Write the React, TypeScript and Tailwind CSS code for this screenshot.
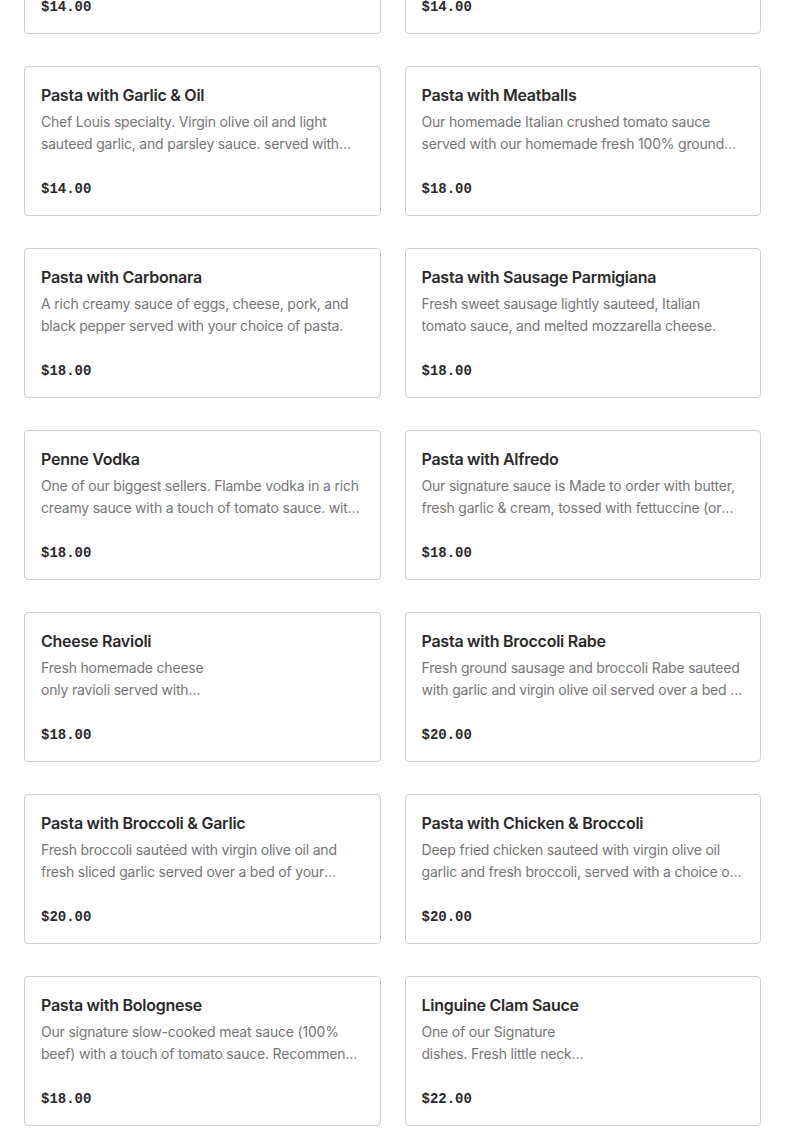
import React from 'react';

interface MenuItem {
  name: string;
  description: string;
  price: string;
  narrow?: boolean;
}

const items: MenuItem[] = [
  { name: 'Pasta with Marinara', description: 'Our homemade Italian crushed tomato sauce served over your choice of pasta.', price: '$14.00' },
  { name: 'Pasta with Butter', description: 'Fresh butter and parmesan cheese served over your choice of pasta.', price: '$14.00' },
  { name: 'Pasta with Garlic & Oil', description: 'Chef Louis specialty. Virgin olive oil and light sauteed garlic, and parsley sauce. served with your choice of pasta.', price: '$14.00' },
  { name: 'Pasta with Meatballs', description: 'Our homemade Italian crushed tomato sauce served with our homemade fresh 100% ground beef meatballs.', price: '$18.00' },
  { name: 'Pasta with Carbonara', description: 'A rich creamy sauce of eggs, cheese, pork, and black pepper served with your choice of pasta.', price: '$18.00' },
  { name: 'Pasta with Sausage Parmigiana', description: 'Fresh sweet sausage lightly sauteed, Italian tomato sauce, and melted mozzarella cheese.', price: '$18.00' },
  { name: 'Penne Vodka', description: 'One of our biggest sellers. Flambe vodka in a rich creamy sauce with a touch of tomato sauce. with parmesan cheese.', price: '$18.00' },
  { name: 'Pasta with Alfredo', description: 'Our signature sauce is Made to order with butter, fresh garlic & cream, tossed with fettuccine (or any pasta).', price: '$18.00' },
  { name: 'Cheese Ravioli', description: 'Fresh homemade cheese only ravioli served with our homemade tomato sauce.', price: '$18.00', narrow: true },
  { name: 'Pasta with Broccoli Rabe', description: 'Fresh ground sausage and broccoli Rabe sauteed with garlic and virgin olive oil served over a bed of pasta.', price: '$20.00' },
  { name: 'Pasta with Broccoli & Garlic', description: 'Fresh broccoli sautéed with virgin olive oil and fresh sliced garlic served over a bed of your choice of pasta.', price: '$20.00' },
  { name: 'Pasta with Chicken & Broccoli', description: 'Deep fried chicken sauteed with virgin olive oil garlic and fresh broccoli, served with a choice of pasta.', price: '$20.00' },
  { name: 'Pasta with Bolognese', description: 'Our signature slow-cooked meat sauce (100% beef) with a touch of tomato sauce. Recommend with fettuccine.', price: '$18.00' },
  { name: 'Linguine Clam Sauce', description: 'One of our Signature dishes. Fresh little neck clams in white or red sauce.', price: '$22.00', narrow: true },
];

const MenuCard = ({ item }: { item: MenuItem }) => (
  <div className="h-[150px] rounded border border-[#cfcfcf] bg-white px-4 pt-4 pb-[15px] flex flex-col">
    <h3 className="text-[16px] leading-6 font-semibold text-[#2a2a2a] font-['Inter',sans-serif] tracking-[-0.25px]">
      {item.name}
    </h3>
    <p
      className={`mt-1 text-[14px] leading-[22px] text-[#767676] font-['Inter',sans-serif] tracking-[-0.2px] line-clamp-2 ${
        item.narrow ? 'max-w-[170px]' : ''
      }`}
    >
      {item.description}
    </p>
    <div className="mt-auto text-[14px] leading-[22px] font-bold text-[#2a2a2a] font-['Liberation_Mono',monospace]">
      {item.price}
    </div>
  </div>
);

const App = () => {
  return (
    <div className="h-[1130px] overflow-hidden bg-white">
      <div className="-mt-[116px] px-6 grid grid-cols-2 gap-x-6 gap-y-8">
        {items.map((item) => (
          <MenuCard key={item.name} item={item} />
        ))}
      </div>
    </div>
  );
};

export default App;
